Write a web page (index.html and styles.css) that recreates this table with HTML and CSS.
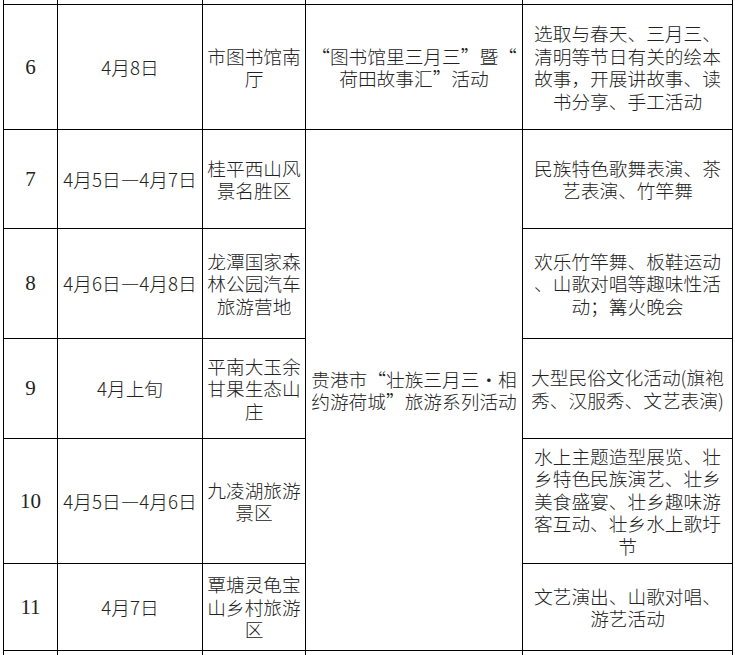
FILE: index.html
```html
<!DOCTYPE html>
<html lang="zh-CN">
<head>
<meta charset="utf-8">
<title>活动安排表</title>
<link rel="stylesheet" href="styles.css">
</head>
<body>
<div class="sheet">
<table class="schedule">
  <colgroup>
    <col class="c-no">
    <col class="c-date">
    <col class="c-place">
    <col class="c-name">
    <col class="c-content">
  </colgroup>
  <tbody>
    <tr class="r-stub-top">
      <td></td><td></td><td></td><td></td><td></td>
    </tr>
    <tr class="r6">
      <td class="no">6</td>
      <td class="date">4月8日</td>
      <td class="place"><span class="ln">市图书馆南</span><span class="ln">厅</span></td>
      <td class="name"><span class="ln">“图书馆里三月三”暨“</span><span class="ln">荷田故事汇”活动</span></td>
      <td class="content"><span class="ln">选取与春天、三月三、</span><span class="ln">清明等节日有关的绘本</span><span class="ln">故事，开展讲故事、读</span><span class="ln">书分享、手工活动</span></td>
    </tr>
    <tr class="r7">
      <td class="no">7</td>
      <td class="date">4月5日—4月7日</td>
      <td class="place"><span class="ln">桂平西山风</span><span class="ln">景名胜区</span></td>
      <td class="name" rowspan="5"><span class="ln">贵港市“壮族三月三•相</span><span class="ln">约游荷城”旅游系列活动</span></td>
      <td class="content"><span class="ln">民族特色歌舞表演、茶</span><span class="ln">艺表演、竹竿舞</span></td>
    </tr>
    <tr class="r8">
      <td class="no">8</td>
      <td class="date">4月6日—4月8日</td>
      <td class="place"><span class="ln">龙潭国家森</span><span class="ln">林公园汽车</span><span class="ln">旅游营地</span></td>
      <td class="content"><span class="ln">欢乐竹竿舞、板鞋运动</span><span class="ln">、山歌对唱等趣味性活</span><span class="ln">动；篝火晚会</span></td>
    </tr>
    <tr class="r9">
      <td class="no">9</td>
      <td class="date">4月上旬</td>
      <td class="place"><span class="ln">平南大玉余</span><span class="ln">甘果生态山</span><span class="ln">庄</span></td>
      <td class="content"><span class="ln">大型民俗文化活动(旗袍</span><span class="ln">秀、汉服秀、文艺表演)</span></td>
    </tr>
    <tr class="r10">
      <td class="no">10</td>
      <td class="date">4月5日—4月6日</td>
      <td class="place"><span class="ln">九凌湖旅游</span><span class="ln">景区</span></td>
      <td class="content"><span class="ln">水上主题造型展览、壮</span><span class="ln">乡特色民族演艺、壮乡</span><span class="ln">美食盛宴、壮乡趣味游</span><span class="ln">客互动、壮乡水上歌圩</span><span class="ln">节</span></td>
    </tr>
    <tr class="r11">
      <td class="no">11</td>
      <td class="date">4月7日</td>
      <td class="place"><span class="ln">覃塘灵龟宝</span><span class="ln">山乡村旅游</span><span class="ln">区</span></td>
      <td class="content"><span class="ln">文艺演出、山歌对唱、</span><span class="ln">游艺活动</span></td>
    </tr>
    <tr class="r-stub-bottom">
      <td></td><td></td><td></td><td></td><td></td>
    </tr>
  </tbody>
</table>
</div>
</body>
</html>
```
FILE: styles.css
```css
html, body {
  margin: 0;
  padding: 0;
  background: #ffffff;
}

.sheet {
  width: 735px;
  height: 655px;
  overflow: hidden;
  padding-left: 3px;
  box-sizing: border-box;
}

.schedule {
  border-collapse: collapse;
  table-layout: fixed;
  width: 730px;
  font-family: "Noto Sans CJK SC", "Noto Sans", sans-serif;
  font-weight: 300;
  font-size: 18.7px;
  line-height: 22.5px;
  color: #222;
}

.c-no { width: 54px; }
.c-date { width: 145px; }
.c-place { width: 103px; }
.c-name { width: 217px; }
.c-content { width: 210px; }

.schedule td {
  border: 1px solid #000;
  padding: 0;
  text-align: center;
  vertical-align: middle;
  white-space: nowrap;
  overflow: hidden;
}

.ln {
  display: block;
  height: 22.5px;
  line-height: 22.5px;
}

.r-stub-top td {
  border-top: none;
  height: 4px;
}

.r-stub-bottom td {
  border-bottom: none;
  height: 10px;
}

.r6 { height: 125px; }
.r7 { height: 99px; }
.r8 { height: 110px; }
.r9 { height: 100px; }
.r10 { height: 125px; }
.r11 { height: 87px; }

.no {
  font-family: "Liberation Serif", "Times New Roman", serif;
  font-weight: 400;
  font-size: 21px;
}
```
